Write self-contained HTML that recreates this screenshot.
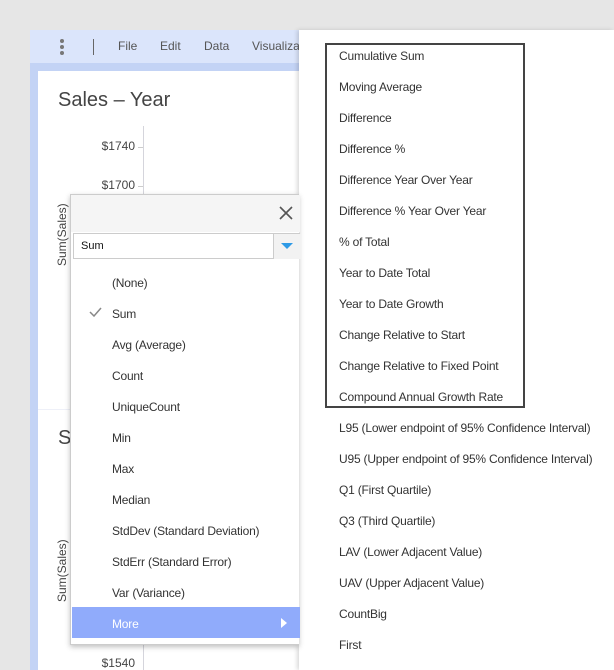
<!DOCTYPE html>
<html><head><meta charset="utf-8"><style>
*{margin:0;padding:0;box-sizing:border-box}
html,body{width:614px;height:670px;overflow:hidden}
body{background:#e6e6e6;position:relative;font-family:"Liberation Sans",sans-serif;color:#333}
.abs{position:absolute}
.tb{left:30px;top:30px;width:290px;height:33px;background:#dbe5fb}
.tb span{position:absolute;top:9px;font-size:12px;color:#555}
.side{left:30px;top:63px;width:290px;height:607px;background:#c3d3f5}
.card{left:38px;top:71px;width:270px;height:599px;background:#fff;overflow:hidden}
.ylab{font-size:12px;color:#444;text-align:right;width:60px}
.rot{transform:rotate(-90deg);transform-origin:left top;font-size:12px;color:#444;white-space:nowrap}
.menu{left:299px;top:30px;width:315px;height:640px;background:#fff;box-shadow:-2px 0 4px rgba(0,0,0,.15)}
.mi{position:absolute;left:40px;font-size:12px;color:#333;white-space:nowrap;letter-spacing:-0.2px}
.box{left:325px;top:43px;width:200px;height:365px;border:2px solid #444}
.dd{left:70px;top:194px;width:229px;height:451px;background:#fff;box-shadow:0 2px 5px rgba(0,0,0,.25);border:1px solid #ccc;border-right:none}
.hd{left:0;top:0;width:229px;height:37px;background:#f5f5f5}
.sel{left:2px;top:38px;width:227px;height:26px;background:#fff;border:1px solid #ccc;border-right:none}
.li{position:absolute;left:41px;font-size:12px;color:#333;white-space:nowrap;letter-spacing:-0.2px}
</style></head><body>
<div class="abs tb">
 <div class="abs" style="left:30px;top:9px;width:4px;height:4px;border-radius:2px;background:#777"></div>
 <div class="abs" style="left:30px;top:15px;width:4px;height:4px;border-radius:2px;background:#777"></div>
 <div class="abs" style="left:30px;top:21px;width:4px;height:4px;border-radius:2px;background:#777"></div>
 <div class="abs" style="left:63px;top:9px;width:1px;height:16px;background:#666"></div>
 <span style="left:88px">File</span><span style="left:130px">Edit</span><span style="left:174px">Data</span><span style="left:222px">Visualiza</span>
</div>
<div class="abs side"></div>
<div class="abs card">
 <div class="abs" style="left:20px;top:18px;font-size:20px;font-weight:300;color:#444">Sales – Year</div>
 <div class="abs" style="left:105px;top:55px;width:1px;height:550px;background:#d5d5dc"></div>
 <div class="abs ylab" style="left:37px;top:68px">$1740</div>
 <div class="abs" style="left:100px;top:76px;width:5px;height:1px;background:#ccc"></div>
 <div class="abs ylab" style="left:37px;top:107px">$1700</div>
 <div class="abs" style="left:100px;top:115px;width:5px;height:1px;background:#ccc"></div>
 <div class="abs rot" style="left:17px;top:195px">Sum(Sales)</div>
 <div class="abs" style="left:0;top:338px;width:270px;height:1px;background:#eef0f8"></div>
 <div class="abs" style="left:20px;top:356px;font-size:20px;font-weight:300;color:#444">S</div>
 <div class="abs rot" style="left:17px;top:531px">Sum(Sales)</div>
 <div class="abs ylab" style="left:37px;top:585px">$1540</div>
 <div class="abs" style="left:32px;top:280px;width:3px;height:20px;background:#3a8fd8"></div>
</div>
<div class="abs menu">
 <div class="mi" style="top:19px">Cumulative Sum</div>
 <div class="mi" style="top:50px">Moving Average</div>
 <div class="mi" style="top:81px">Difference</div>
 <div class="mi" style="top:112px">Difference %</div>
 <div class="mi" style="top:143px">Difference Year Over Year</div>
 <div class="mi" style="top:174px">Difference % Year Over Year</div>
 <div class="mi" style="top:205px">% of Total</div>
 <div class="mi" style="top:236px">Year to Date Total</div>
 <div class="mi" style="top:267px">Year to Date Growth</div>
 <div class="mi" style="top:298px">Change Relative to Start</div>
 <div class="mi" style="top:329px">Change Relative to Fixed Point</div>
 <div class="mi" style="top:360px">Compound Annual Growth Rate</div>
 <div class="mi" style="top:391px">L95 (Lower endpoint of 95% Confidence Interval)</div>
 <div class="mi" style="top:422px">U95 (Upper endpoint of 95% Confidence Interval)</div>
 <div class="mi" style="top:453px">Q1 (First Quartile)</div>
 <div class="mi" style="top:484px">Q3 (Third Quartile)</div>
 <div class="mi" style="top:515px">LAV (Lower Adjacent Value)</div>
 <div class="mi" style="top:546px">UAV (Upper Adjacent Value)</div>
 <div class="mi" style="top:577px">CountBig</div>
 <div class="mi" style="top:608px">First</div>
</div>
<div class="abs box"></div>
<div class="abs dd">
 <div class="abs hd">
  <svg class="abs" style="left:208px;top:11px" width="14" height="14"><path d="M1 1L13 13M13 1L1 13" stroke="#555" stroke-width="1.6"/></svg>
 </div>
 <div class="abs sel">
  <div class="abs" style="left:7px;top:6px;font-size:11px;color:#111">Sum</div>
  <div class="abs" style="left:199px;top:0;width:1px;height:25px;background:#ccc"></div>
  <div class="abs" style="left:200px;top:0;width:27px;height:25px;background:#f2f2f2"></div>
  <svg class="abs" style="left:207px;top:9px" width="12" height="7"><path d="M0 0H12L6 6Z" fill="#2e9ae6"/></svg>
 </div>
 <div class="li" style="top:81px">(None)</div>
 <svg class="abs" style="left:18px;top:112px" width="13" height="10"><path d="M1 5L5 9L12 1" stroke="#888" stroke-width="1.5" fill="none"/></svg>
 <div class="li" style="top:112px">Sum</div>
 <div class="li" style="top:143px">Avg (Average)</div>
 <div class="li" style="top:174px">Count</div>
 <div class="li" style="top:205px">UniqueCount</div>
 <div class="li" style="top:236px">Min</div>
 <div class="li" style="top:267px">Max</div>
 <div class="li" style="top:298px">Median</div>
 <div class="li" style="top:329px">StdDev (Standard Deviation)</div>
 <div class="li" style="top:360px">StdErr (Standard Error)</div>
 <div class="li" style="top:391px">Var (Variance)</div>
 <div class="abs" style="left:1px;top:412px;width:228px;height:31px;background:#90abfb"></div>
 <div class="li" style="top:422px;color:#fff">More</div>
 <svg class="abs" style="left:210px;top:423px" width="6" height="10"><path d="M0 0L6 5L0 10Z" fill="#fff"/></svg>
</div>
</body></html>
